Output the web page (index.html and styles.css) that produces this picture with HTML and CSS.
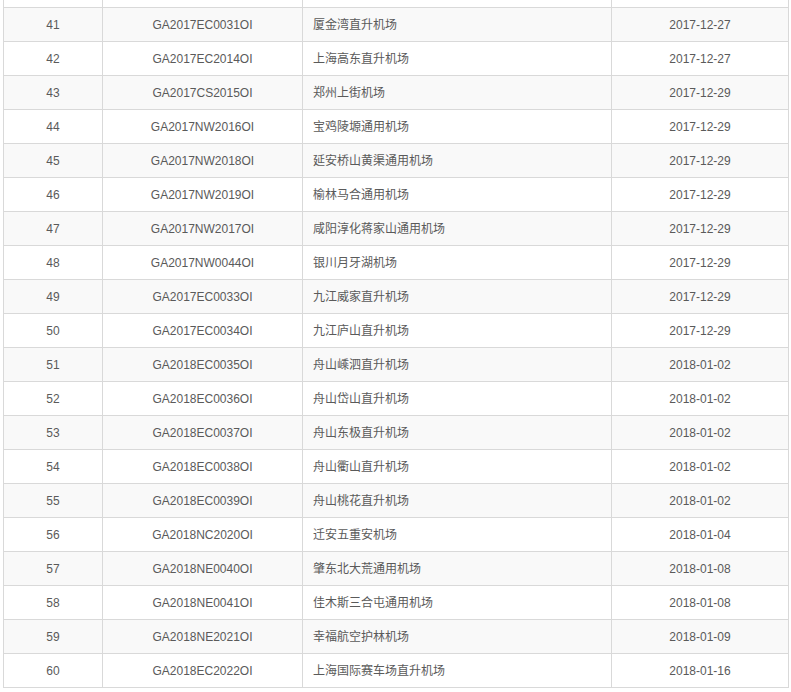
FILE: index.html
```html
<!DOCTYPE html>
<html lang="zh-CN">
<head>
<meta charset="utf-8">
<link rel="stylesheet" href="styles.css">
</head>
<body>
<div class="wrap">
<table class="grid">
<colgroup><col class="c-no"><col class="c-code"><col class="c-name"><col class="c-date"></colgroup>
<tbody>
<tr class="even"><td class="ctr">&nbsp;</td><td class="ctr">&nbsp;</td><td class="lft">&nbsp;</td><td class="ctr">&nbsp;</td></tr>
<tr class="odd"><td class="ctr">41</td><td class="ctr">GA2017EC0031OI</td><td class="lft">厦金湾直升机场</td><td class="ctr">2017-12-27</td></tr>
<tr class="even"><td class="ctr">42</td><td class="ctr">GA2017EC2014OI</td><td class="lft">上海高东直升机场</td><td class="ctr">2017-12-27</td></tr>
<tr class="odd"><td class="ctr">43</td><td class="ctr">GA2017CS2015OI</td><td class="lft">郑州上街机场</td><td class="ctr">2017-12-29</td></tr>
<tr class="even"><td class="ctr">44</td><td class="ctr">GA2017NW2016OI</td><td class="lft">宝鸡陵塬通用机场</td><td class="ctr">2017-12-29</td></tr>
<tr class="odd"><td class="ctr">45</td><td class="ctr">GA2017NW2018OI</td><td class="lft">延安桥山黄渠通用机场</td><td class="ctr">2017-12-29</td></tr>
<tr class="even"><td class="ctr">46</td><td class="ctr">GA2017NW2019OI</td><td class="lft">榆林马合通用机场</td><td class="ctr">2017-12-29</td></tr>
<tr class="odd"><td class="ctr">47</td><td class="ctr">GA2017NW2017OI</td><td class="lft">咸阳淳化蒋家山通用机场</td><td class="ctr">2017-12-29</td></tr>
<tr class="even"><td class="ctr">48</td><td class="ctr">GA2017NW0044OI</td><td class="lft">银川月牙湖机场</td><td class="ctr">2017-12-29</td></tr>
<tr class="odd"><td class="ctr">49</td><td class="ctr">GA2017EC0033OI</td><td class="lft">九江威家直升机场</td><td class="ctr">2017-12-29</td></tr>
<tr class="even"><td class="ctr">50</td><td class="ctr">GA2017EC0034OI</td><td class="lft">九江庐山直升机场</td><td class="ctr">2017-12-29</td></tr>
<tr class="odd"><td class="ctr">51</td><td class="ctr">GA2018EC0035OI</td><td class="lft">舟山嵊泗直升机场</td><td class="ctr">2018-01-02</td></tr>
<tr class="even"><td class="ctr">52</td><td class="ctr">GA2018EC0036OI</td><td class="lft">舟山岱山直升机场</td><td class="ctr">2018-01-02</td></tr>
<tr class="odd"><td class="ctr">53</td><td class="ctr">GA2018EC0037OI</td><td class="lft">舟山东极直升机场</td><td class="ctr">2018-01-02</td></tr>
<tr class="even"><td class="ctr">54</td><td class="ctr">GA2018EC0038OI</td><td class="lft">舟山衢山直升机场</td><td class="ctr">2018-01-02</td></tr>
<tr class="odd"><td class="ctr">55</td><td class="ctr">GA2018EC0039OI</td><td class="lft">舟山桃花直升机场</td><td class="ctr">2018-01-02</td></tr>
<tr class="even"><td class="ctr">56</td><td class="ctr">GA2018NC2020OI</td><td class="lft">迁安五重安机场</td><td class="ctr">2018-01-04</td></tr>
<tr class="odd"><td class="ctr">57</td><td class="ctr">GA2018NE0040OI</td><td class="lft">肇东北大荒通用机场</td><td class="ctr">2018-01-08</td></tr>
<tr class="even"><td class="ctr">58</td><td class="ctr">GA2018NE0041OI</td><td class="lft">佳木斯三合屯通用机场</td><td class="ctr">2018-01-08</td></tr>
<tr class="odd"><td class="ctr">59</td><td class="ctr">GA2018NE2021OI</td><td class="lft">幸福航空护林机场</td><td class="ctr">2018-01-09</td></tr>
<tr class="even"><td class="ctr">60</td><td class="ctr">GA2018EC2022OI</td><td class="lft">上海国际赛车场直升机场</td><td class="ctr">2018-01-16</td></tr>
</tbody>
</table>
</div>
</body>
</html>
```
FILE: styles.css
```css
html, body {
  margin: 0;
  padding: 0;
  background: #fff;
}
.wrap {
  width: 791px;
  height: 692px;
  overflow: hidden;
  padding-left: 3px;
  box-sizing: border-box;
}
.grid {
  margin-top: -27px;
  width: 785px;
  border-collapse: collapse;
  table-layout: fixed;
  font-family: "Liberation Sans", "Noto Sans CJK SC", sans-serif;
  font-size: 12px;
  color: #5a5a5a;
}
.c-no { width: 99px; }
.c-code { width: 200px; }
.c-name { width: 309px; }
.c-date { width: 177px; }
.grid td {
  border: 1px solid #d9d9d9;
  height: 34px;
  padding: 0 10px;
  line-height: 16px;
  box-sizing: border-box;
  white-space: nowrap;
}
.grid .ctr { text-align: center; }
.grid .lft { text-align: left; }
.odd td { background: #f9f9f9; }
.even td { background: #fff; }
```
